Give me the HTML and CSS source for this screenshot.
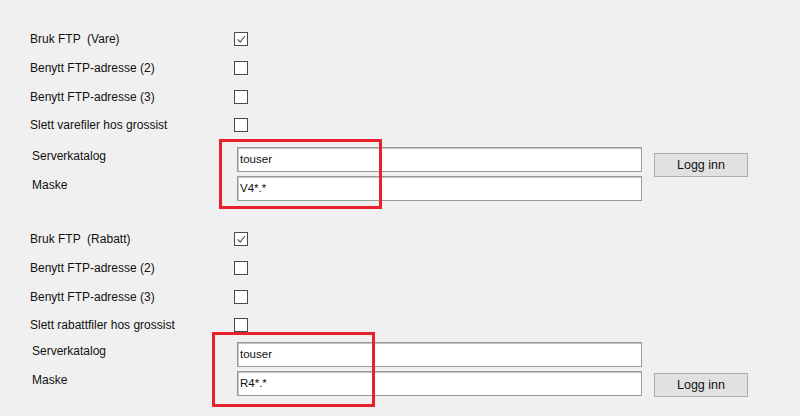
FILE: index.html
```html
<!DOCTYPE html>
<html lang="en">
<head>
    <meta charset="UTF-8">
    <meta name="viewport" content="width=device-width, initial-scale=1.0">
    <title>FTP-innstillinger</title>
    <link rel="stylesheet" href="styles.css">
</head>
<body>
    <main class="panel">
        <!-- Vare -->
        <section class="group group-vare">
            <div class="check-row">
                <label class="caption">Bruk FTP  (Vare)</label>
                <span class="box checked"><svg viewBox="0 0 14 14"><polyline points="3,7.5 6,10.5 11.5,3.5"/></svg></span>
            </div>
            <div class="check-row">
                <label class="caption">Benytt FTP-adresse (2)</label>
                <span class="box"></span>
            </div>
            <div class="check-row">
                <label class="caption">Benytt FTP-adresse (3)</label>
                <span class="box"></span>
            </div>
            <div class="check-row">
                <label class="caption">Slett varefiler hos grossist</label>
                <span class="box"></span>
            </div>

            <div class="fields">
                <div class="field-row">
                    <label class="caption field-label">Serverkatalog</label>
                    <input class="text" type="text" value="touser">
                    <button class="btn btn-low">Logg inn</button>
                </div>
                <div class="field-row">
                    <label class="caption field-label">Maske</label>
                    <input class="text" type="text" value="V4*.*">
                </div>
            </div>
            <div class="mark mark-vare"></div>
        </section>

        <!-- Rabatt -->
        <section class="group group-rabatt">
            <div class="check-row">
                <label class="caption">Bruk FTP  (Rabatt)</label>
                <span class="box checked"><svg viewBox="0 0 14 14"><polyline points="3,7.5 6,10.5 11.5,3.5"/></svg></span>
            </div>
            <div class="check-row">
                <label class="caption">Benytt FTP-adresse (2)</label>
                <span class="box"></span>
            </div>
            <div class="check-row">
                <label class="caption">Benytt FTP-adresse (3)</label>
                <span class="box"></span>
            </div>
            <div class="check-row">
                <label class="caption">Slett rabattfiler hos grossist</label>
                <span class="box"></span>
            </div>

            <div class="fields">
                <div class="field-row">
                    <label class="caption field-label">Serverkatalog</label>
                    <input class="text" type="text" value="touser">
                </div>
                <div class="field-row">
                    <label class="caption field-label">Maske</label>
                    <input class="text" type="text" value="R4*.*">
                    <button class="btn">Logg inn</button>
                </div>
            </div>
            <div class="mark mark-rabatt"></div>
        </section>
    </main>
</body>
</html>
```

FILE: styles.css
```css
body {
    margin: 0;
    padding: 0;
    background: #f0f0f0;
    font-family: "Liberation Sans", Arial, sans-serif;
    font-size: 12px;
    color: #111;
    overflow: hidden;
}
.panel {
    width: 800px;
    height: 416px;
}
.group {
    position: relative;
}
.group-vare {
    padding-top: 25px;
}
.group-rabatt {
    margin-top: 22px;
}
.caption {
    white-space: pre;
}
.check-row {
    display: flex;
    align-items: center;
    height: 28.67px;
    padding-left: 30px;
}
.check-row .caption {
    width: 204px;
}
.box {
    width: 14px;
    height: 14px;
    box-sizing: border-box;
    border: 1px solid #4a4a4a;
    background: #fff;
    display: flex;
}
.box svg {
    width: 12px;
    height: 12px;
    fill: none;
    stroke: #555;
    stroke-width: 1.4;
}
.group-vare .fields {
    margin-top: 5.33px;
}
.field-row {
    display: flex;
    align-items: flex-start;
    height: 29px;
    padding-left: 32px;
}
.field-label {
    width: 205px;
    margin-top: 4px;
}
.text {
    width: 405px;
    height: 25px;
    margin: 2px 0 0 0;
    box-sizing: border-box;
    border: 1px solid #9a9a9a;
    box-shadow: inset 1px 1px 0 #c4c4c4;
    background: #fff;
    font: inherit;
    font-size: 11.5px;
    color: #111;
    padding: 0 2px;
    outline: none;
}
.btn {
    width: 94px;
    height: 24px;
    margin: 4px 0 0 12px;
    box-sizing: border-box;
    border: 1px solid #adadad;
    background: #e1e1e1;
    font: inherit;
    font-size: 12.5px;
    color: #111;
    padding: 0;
}
.btn-low {
    margin-top: 8px;
}
.mark {
    position: absolute;
    border: 3px solid #e8212b;
    box-sizing: border-box;
}
.mark-vare {
    left: 219px;
    top: 139px;
    width: 163px;
    height: 70px;
}
.mark-rabatt {
    left: 212px;
    top: 107px;
    width: 163px;
    height: 75px;
}
```
